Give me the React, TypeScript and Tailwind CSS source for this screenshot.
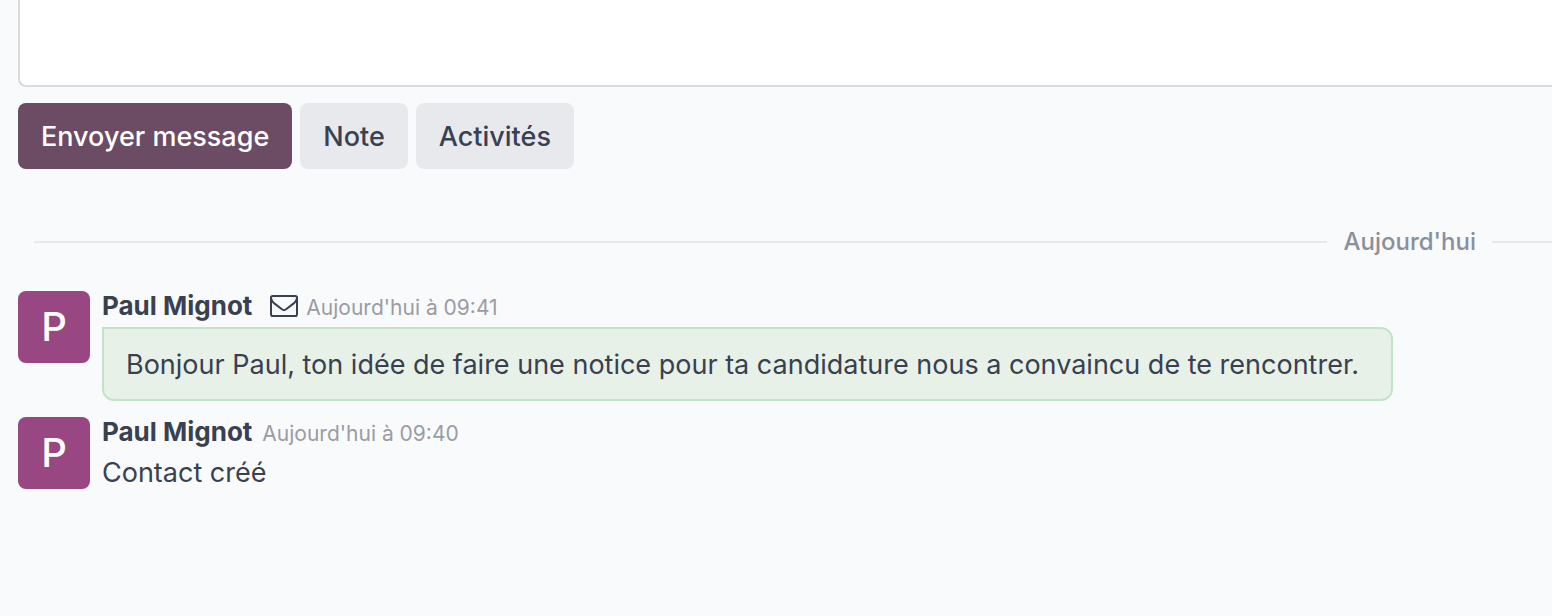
interface Message {
  id: number;
  author: string;
  date: string;
  body: string;
  isEmail: boolean;
}

const messages: Message[] = [
  {
    id: 2,
    author: "Paul Mignot",
    date: "Aujourd'hui à 09:41",
    body: "Bonjour Paul, ton idée de faire une notice pour ta candidature nous a convaincu de te rencontrer.",
    isEmail: true,
  },
  {
    id: 1,
    author: "Paul Mignot",
    date: "Aujourd'hui à 09:40",
    body: "Contact créé",
    isEmail: false,
  },
];

function EnvelopeIcon() {
  return (
    <svg viewBox="0 0 28 22" fill="none" stroke="currentColor" strokeWidth="2" className="ml-4 h-[22px] w-7 self-center">
      <rect x="1" y="1" width="26" height="20" rx="1.8" />
      <path d="M1.2 3.6C1.4 6 3 7.4 4.6 8.6L10.6 13.3C11.8 14.3 12.9 15.2 14 15.2S16.2 14.3 17.4 13.3L23.4 8.6C25 7.4 26.6 6 26.8 3.6" />
    </svg>
  );
}

function Avatar() {
  return (
    <div className="flex size-[72px] shrink-0 items-center justify-center rounded-lg bg-[#984782] text-[40px] font-medium text-white">
      P
    </div>
  );
}

function MessageItem({ message }: { message: Message }) {
  return (
    <article className="flex gap-3">
      <Avatar />
      <div className="min-w-0">
        <header className="flex h-[30px] items-baseline leading-[30px]">
          <span className="pr-0.5 text-[26px] font-bold">{message.author}</span>
          {message.isEmail && <EnvelopeIcon />}
          <time className="ml-2 text-[21px] text-[#9a9ca5]">{message.date}</time>
        </header>
        {message.isEmail ? (
          <p className="mt-1.5 rounded-xl rounded-tl-none border-2 border-[#c3e3c8] bg-[#e8f1e8] pt-[17px] pr-8 pb-[15px] pl-[22px] text-[27px] leading-[38px]">
            {message.body}
          </p>
        ) : (
          <p className="mt-[7px] text-[27px] leading-[38px]">{message.body}</p>
        )}
      </div>
    </article>
  );
}

export default function App() {
  return (
    <div className="min-h-screen overflow-hidden bg-[#f9fafc] font-['Inter',sans-serif] text-[#394050]">
      {/* Bottom of the form sheet */}
      <div className="-mr-2 ml-[18px] h-[87px] rounded-bl-lg border-b-2 border-l-2 border-[#d8dadd] bg-white" />

      <div className="mt-4 flex gap-2 pl-[18px] text-[27px] leading-[42px] font-medium">
        <button className="rounded-lg bg-[#6b4c64] px-[23px] pt-[13px] pb-[11px] text-white">Envoyer message</button>
        <button className="rounded-lg bg-[#e7e9ed] px-[23px] pt-[13px] pb-[11px]">Note</button>
        <button className="rounded-lg bg-[#e7e9ed] px-[23px] pt-[13px] pb-[11px]">Activités</button>
      </div>

      <div className="mt-[55px] flex items-center pl-[34px]">
        <hr className="flex-1 border-t-2 border-[#e7e9ed]" />
        <span className="px-4 text-[24px] leading-9 font-medium text-[#8a8f9c]">Aujourd'hui</span>
        <hr className="w-[60px] border-t-2 border-[#e7e9ed]" />
      </div>

      <div className="mt-[31px] flex flex-col gap-4 pl-[18px]">
        {messages.map((message) => (
          <MessageItem key={message.id} message={message} />
        ))}
      </div>
    </div>
  );
}
